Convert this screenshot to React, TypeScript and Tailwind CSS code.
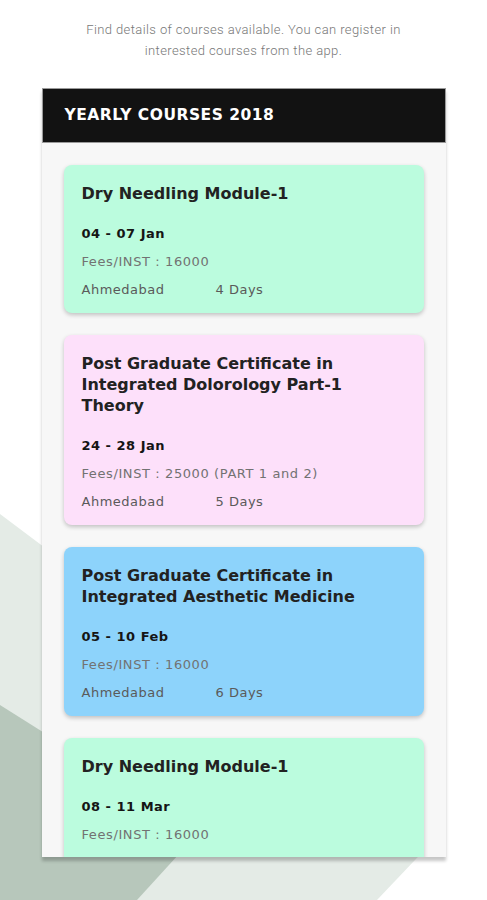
import React from "react";

interface Course {
    id: number;
    title: string[];
    date: string;
    fees: string;
    place?: string;
    days?: string;
    color: string;
}

const courses: Course[] = [
    {
        id: 1,
        title: ["Dry Needling Module-1"],
        date: "04 - 07 Jan",
        fees: "Fees/INST : 16000",
        place: "Ahmedabad",
        days: "4 Days",
        color: "bg-[#bbfcde]",
    },
    {
        id: 2,
        title: ["Post Graduate Certificate in", "Integrated Dolorology Part-1", "Theory"],
        date: "24 - 28 Jan",
        fees: "Fees/INST : 25000 (PART 1 and 2)",
        place: "Ahmedabad",
        days: "5 Days",
        color: "bg-[#fde0fa]",
    },
    {
        id: 3,
        title: ["Post Graduate Certificate in", "Integrated Aesthetic Medicine"],
        date: "05 - 10 Feb",
        fees: "Fees/INST : 16000",
        place: "Ahmedabad",
        days: "6 Days",
        color: "bg-[#8dd3fb]",
    },
    {
        // last card runs past the bottom of the panel
        id: 4,
        title: ["Dry Needling Module-1"],
        date: "08 - 11 Mar",
        fees: "Fees/INST : 16000",
        color: "bg-[#bbfcde]",
    },
];

const CourseCard: React.FunctionComponent<{ d: Course }> = ({ d }) => {
    return (
        <div className={`${d.color} shrink-0 rounded-[8px] px-[18px] pt-[18px] pb-[13px] shadow-[0_2px_4px_rgba(0,0,0,0.22)]`}>
            <div className="text-[16px] leading-[21px] font-semibold text-[#222]">
                {d.title.map((t) => (
                    <div key={t}>{t}</div>
                ))}
            </div>
            <div className="mt-[20px] text-[13px] leading-[20px] font-bold tracking-[0.5px] text-[#151515]">{d.date}</div>
            <div className="mt-[8px] text-[13px] leading-[20px] tracking-[0.6px] text-[#727272]">{d.fees}</div>
            {d.place ? (
                <div className="mt-[8px] flex text-[13px] leading-[20px] tracking-[0.5px] text-[#5a5a5a]">
                    <span className="w-[134px]">{d.place}</span>
                    <span>{d.days}</span>
                </div>
            ) : (
                <div className="h-[40px]" />
            )}
        </div>
    );
};

const App: React.FunctionComponent = () => {
    return (
        <div className="relative w-[487px] h-[900px] overflow-hidden bg-white">
            {/* decorative background shapes */}
            <svg className="absolute inset-0" width="487" height="900" viewBox="0 0 487 900">
                <polygon points="0,514 434,840 377,900 0,900" fill="#e4ebe6" />
                <polygon points="0,705 200,831 137,900 0,900" fill="#b7c7bb" />
            </svg>

            <div className="relative flex flex-col items-center">
                <p
                    className="mt-[19px] text-center text-[13px] leading-[21px] tracking-[0.4px] text-[#777] font-light"
                    style={{ fontFamily: "Roboto, sans-serif" }}
                >
                    Find details of courses available. You can register in
                    <br />
                    interested courses from the app.
                </p>

                <div
                    className="mt-[27px] w-[404px] h-[769px] flex flex-col bg-[#f7f7f7] shadow-[0_4px_3px_rgba(0,0,0,0.22)]"
                    style={{ fontFamily: "'DejaVu Sans', sans-serif" }}
                >
                    <div className="h-[55px] shrink-0 flex items-center px-[22px] bg-[#121212] border border-[#9a9a9a]">
                        <h3 className="text-[15.5px] font-bold text-white tracking-[0.5px]">YEARLY COURSES 2018</h3>
                    </div>
                    <div className="flex-1 overflow-hidden px-[22px] pt-[22px] flex flex-col gap-[22px]">
                        {courses.map((d) => (
                            <CourseCard key={d.id} d={d} />
                        ))}
                    </div>
                </div>
            </div>
        </div>
    );
};

export default App;
